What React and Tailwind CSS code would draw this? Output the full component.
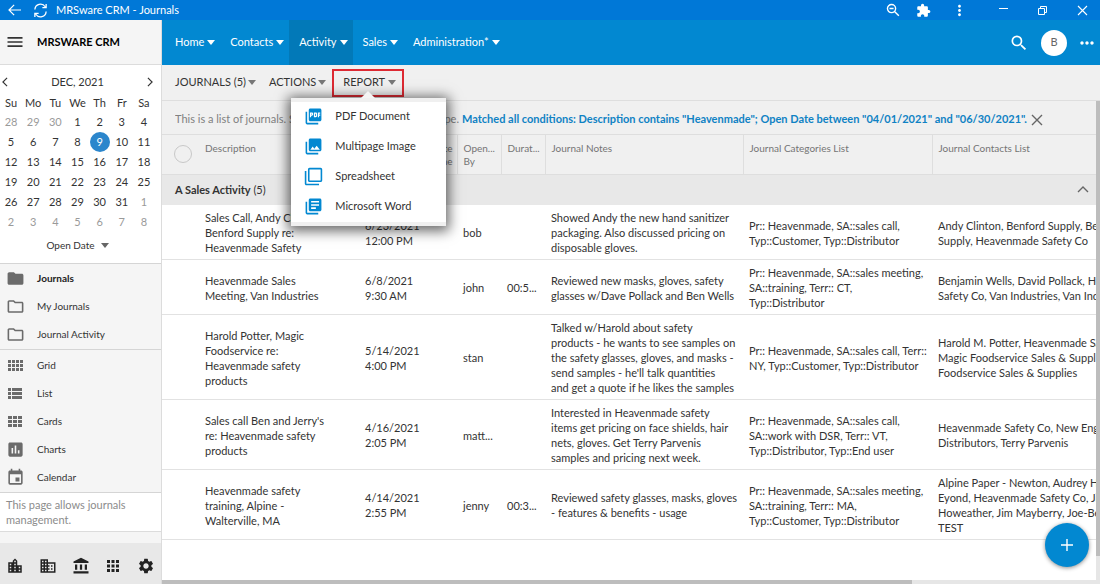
import React from "react";
import {
  MdAccountBalance,
  MdApps,
  MdBusiness,
  MdEvent,
  MdExtension,
  MdFilterNone,
  MdFolder,
  MdInsertChart,
  MdLibraryBooks,
  MdLocationCity,
  MdMenu,
  MdMoreHoriz,
  MdMoreVert,
  MdOutlineFolder,
  MdPhotoLibrary,
  MdPictureAsPdf,
  MdSearch,
  MdSettings,
} from "react-icons/md";

function Caret({ className = "" }) {
  return (
    <svg viewBox="0 0 8 5" className={"h-[5px] w-2 shrink-0 " + className} aria-hidden="true">
      <path d="M0 0h8L4 5z" fill="currentColor" />
    </svg>
  );
}

function Line({ d, size = "size-4", box = "0 0 16 16", width = 1.4 }) {
  return (
    <svg viewBox={box} className={size} fill="none" stroke="currentColor" strokeWidth={width} aria-hidden="true">
      <path d={d} />
    </svg>
  );
}

function Blocks({ cols, rows, widths }) {
  const cells = [];
  let x = 1;
  for (let c = 0; c < cols; c += 1) {
    for (let r = 0; r < rows; r += 1) {
      cells.push(<rect key={c + "-" + r} x={x} y={2 + r * 4} width={widths[c]} height={3} />);
    }
    x += widths[c] + 1;
  }
  return (
    <svg viewBox="0 0 17 15" className="h-[15px] w-[17px]" fill="currentColor" aria-hidden="true">
      {cells}
    </svg>
  );
}

const weeks = [
  [28, 29, 30, 1, 2, 3, 4],
  [5, 6, 7, 8, 9, 10, 11],
  [12, 13, 14, 15, 16, 17, 18],
  [19, 20, 21, 22, 23, 24, 25],
  [26, 27, 28, 29, 30, 31, 1],
  [2, 3, 4, 5, 6, 7, 8],
];

function dayClass(day, week) {
  const outside = (week === 0 && day > 20) || (week > 3 && day < 10);
  if (outside) return "size-5 text-[#9a9a9a]";
  if (day === 9) return "size-5 rounded-full bg-[#2b86cc] text-white";
  return "size-5";
}

const menus = ["Home", "Contacts", "Activity", "Sales", "Administration*"];

const reports = [
  ["PDF Document", MdPictureAsPdf],
  ["Multipage Image", MdPhotoLibrary],
  ["Spreadsheet", MdFilterNone],
  ["Microsoft Word", MdLibraryBooks],
];

const folders = [
  ["Journals", <MdFolder size={19} />],
  ["My Journals", <MdOutlineFolder size={19} />],
  ["Journal Activity", <MdOutlineFolder size={19} />],
];

const views = [
  ["Grid", <Blocks cols={4} rows={3} widths={[3, 3, 3, 3]} />],
  ["List", <Blocks cols={2} rows={3} widths={[3, 10]} />],
  ["Cards", <Blocks cols={3} rows={3} widths={[4, 4, 4]} />],
  ["Charts", <MdInsertChart size={19} />],
  ["Calendar", <MdEvent size={19} />],
];

const shortcuts = [
  ["City", MdLocationCity],
  ["Companies", MdBusiness],
  ["Accounts", MdAccountBalance],
  ["Apps", MdApps],
  ["Settings", MdSettings],
];

const journals = [
  {
    description: "Sales Call, Andy Clinton,\nBenford Supply re:\nHeavenmade Safety",
    date: "6/23/2021\n12:00 PM",
    by: "bob",
    duration: "",
    notes: "Showed Andy the new hand sanitizer\npackaging. Also discussed pricing on\ndisposable gloves.",
    categories: "Pr:: Heavenmade, SA::sales call,\nTyp::Customer, Typ::Distributor",
    contacts: "Andy Clinton, Benford Supply, Benford\nSupply, Heavenmade Safety Co",
  },
  {
    description: "Heavenmade Sales\nMeeting, Van Industries",
    date: "6/8/2021\n9:30 AM",
    by: "john",
    duration: "00:5...",
    notes: "Reviewed new masks, gloves, safety\nglasses w/Dave Pollack and Ben Wells",
    categories: "Pr:: Heavenmade, SA::sales meeting,\nSA::training, Terr:: CT,\nTyp::Distributor",
    contacts: "Benjamin Wells, David Pollack, Heavenmade\nSafety Co, Van Industries, Van Industries",
  },
  {
    description: "Harold Potter, Magic\nFoodservice re:\nHeavenmade safety\nproducts",
    date: "5/14/2021\n4:00 PM",
    by: "stan",
    duration: "",
    notes:
      "Talked w/Harold about safety\nproducts - he wants to see samples on\nthe safety glasses, gloves, and masks -\nsend samples - he'll talk quantities\nand get a quote if he likes the samples",
    categories: "Pr:: Heavenmade, SA::sales call, Terr::\nNY, Typ::Customer, Typ::Distributor",
    contacts: "Harold M. Potter, Heavenmade Safety Co,\nMagic Foodservice Sales & Supplies, Magic\nFoodservice Sales & Supplies",
  },
  {
    description: "Sales call Ben and Jerry's\nre: Heavenmade safety\nproducts",
    date: "4/16/2021\n2:05 PM",
    by: "matt...",
    duration: "",
    notes:
      "Interested in Heavenmade safety\nitems get pricing on face shields, hair\nnets, gloves. Get Terry Parvenis\nsamples and pricing next week.",
    categories: "Pr:: Heavenmade, SA::sales call,\nSA::work with DSR, Terr:: VT,\nTyp::Distributor, Typ::End user",
    contacts: "Heavenmade Safety Co, New England\nDistributors, Terry Parvenis",
  },
  {
    description: "Heavenmade safety\ntraining, Alpine -\nWalterville, MA",
    date: "4/14/2021\n2:55 PM",
    by: "jenny",
    duration: "00:3...",
    notes: "Reviewed safety glasses, masks, gloves\n- features & benefits - usage",
    categories: "Pr:: Heavenmade, SA::sales meeting,\nSA::training, Terr:: MA,\nTyp::Customer, Typ::Distributor",
    contacts: "Alpine Paper - Newton, Audrey Hill, Beth\nEyond, Heavenmade Safety Co, Jim\nHoweather, Jim Mayberry, Joe-Ben\nTEST",
  },
];

function TitleBar() {
  return (
    <header className="flex h-5 shrink-0 items-center bg-[#0078d7] pr-3 pl-2 text-white">
      <button aria-label="Back">
        <Line d="M1 7h14M7 1L1 7l6 6" box="0 0 16 14" size="h-3 w-[14px]" />
      </button>
      <button aria-label="Reload" className="ml-[11px]">
        <Line d="M2 7a6 6 0 0 1 11-3M14 1v4h-4M14 9a6 6 0 0 1-11 3M2 15v-4h4" size="size-[15px]" />
      </button>
      <span className="ml-2 text-[11px]">MRSware CRM - Journals</span>
      <div className="ml-auto flex items-center">
        <button aria-label="Zoom" className="mr-4">
          <svg viewBox="0 0 24 24" className="size-[14px]" fill="none" stroke="currentColor" strokeWidth="2.4">
            <circle cx="9.5" cy="9.5" r="7" />
            <path d="M6 9.500h7M15 15l7 7" />
          </svg>
        </button>
        <button aria-label="Extensions" className="mr-5">
          <MdExtension size={15} />
        </button>
        <button aria-label="More" className="mr-[30px]">
          <MdMoreVert size={17} />
        </button>
        <button aria-label="Minimize" className="mr-[28px]">
          <Line d="M1 3.500h9" box="0 0 11 11" size="size-[11px]" width={1} />
        </button>
        <button aria-label="Restore" className="mr-[29px]">
          <Line d="M1.500 3.500h6v6h-6zM3.500 3.500v-2h6v6h-2" box="0 0 11 11" size="size-[11px]" width={1} />
        </button>
        <button aria-label="Close">
          <Line d="M1 1l9 9M10 1l-9 9" box="0 0 11 11" size="size-[11px]" width={1.1} />
        </button>
      </div>
    </header>
  );
}

function Sidebar() {
  return (
    <aside className="flex w-[162px] shrink-0 flex-col border-r border-[#dcdcdc] bg-[#f5f5f5] text-[#333]">
      <div className="flex h-[45px] shrink-0 items-center border-b border-[#dcdcdc] pl-[5px]">
        <button aria-label="Menu">
          <MdMenu size={20} />
        </button>
        <span className="ml-3 text-[11px] font-bold text-black">MRSWARE CRM</span>
      </div>

      <section className="flex h-[198px] shrink-0 flex-col bg-white pr-1.5 text-[11px]">
        <div className="flex items-center justify-between pt-[9px] pr-px pb-0.5 pl-px">
          <button aria-label="Previous month">
            <Line d="M7 1L2 6l5 5" box="0 0 9 12" size="h-[10px] w-2" />
          </button>
          <span className="leading-4">DEC, 2021</span>
          <button aria-label="Next month">
            <Line d="M2 1l5 5-5 5" box="0 0 9 12" size="h-[10px] w-2" />
          </button>
        </div>
        <table className="w-full table-fixed text-center leading-5">
          <thead>
            <tr>
              {["Su", "Mo", "Tu", "We", "Th", "Fr", "Sa"].map((d) => (
                <th key={d} className="p-0 pt-0.5 leading-[18px] font-normal">
                  {d}
                </th>
              ))}
            </tr>
          </thead>
          <tbody>
            {weeks.map((week, i) => (
              <tr key={i}>
                {week.map((day) => (
                  <td key={day} className="h-5 p-0">
                    <button className={dayClass(day, i)}>{day}</button>
                  </td>
                ))}
              </tr>
            ))}
          </tbody>
        </table>
        <button className="mt-[5px] flex items-center justify-center gap-1.5 text-[10px] leading-4">
          Open Date <Caret className="text-[#666]" />
        </button>
      </section>

      <nav className="border-t border-b border-[#d5d5d5] pb-px text-[10px]">
        {folders.map(([label, icon], i) => (
          <a key={label} href="#" className={"flex h-[28px] items-center pl-[5px] " + (i === 0 ? "font-bold text-[#222]" : "")}>
            <span className="flex w-5 justify-center text-[#6b6b6b]">{icon}</span>
            <span className="ml-3">{label}</span>
          </a>
        ))}
      </nav>
      <nav className="border-b border-[#d5d5d5] pt-px pb-px text-[10px]">
        {views.map(([label, icon]) => (
          <a key={label} href="#" className="flex h-[28px] items-center pl-[5px]">
            <span className="flex w-5 justify-center text-[#6b6b6b]">{icon}</span>
            <span className="ml-3">{label}</span>
          </a>
        ))}
      </nav>
      <p className="border-b border-[#dcdcdc] bg-white py-1 pl-1.5 text-[11px] leading-[15px] text-[#8c8c8c]">
        This page allows journals
        <br />
        management.
      </p>
      <div className="mt-auto flex h-[41px] shrink-0 items-center justify-between bg-[#e8e8e8] px-[6px] pt-1 text-[#222]">
        {shortcuts.map(([label, Icon]) => (
          <button key={label} aria-label={label}>
            <Icon size={18} />
          </button>
        ))}
      </div>
    </aside>
  );
}

function ReportMenu() {
  return (
    <div className="relative">
      <button className="flex h-7 items-center gap-[3px] border-2 border-[#dd2a33] pr-[6px] pl-[9px]">
        REPORT <Caret className="text-[#777]" />
      </button>
      <div className="absolute top-[29px] left-[-41px] z-20 w-[155px] border-y-4 border-[#f0f0f0] bg-white shadow-[0_2px_12px_3px_rgba(0,0,0,0.6)]">
        <svg viewBox="0 0 14 7" className="absolute top-[-11px] left-[70px] h-[7px] w-[14px]" aria-hidden="true">
          <path d="M0 7l7-7 7 7z" fill="#f4f4f4" />
        </svg>
        {reports.map(([label, Icon]) => (
          <button key={label} className="flex h-[30px] w-full items-center gap-3 pl-[13px] whitespace-nowrap">
            <Icon size={19} className="shrink-0 text-[#0288d1]" />
            {label}
          </button>
        ))}
      </div>
    </div>
  );
}

function JournalTable() {
  const head = "border-r border-[#dedede] pt-[7px] pl-1.5 align-top font-normal text-[#757575]";
  const cell = "pt-[5px] pb-1 pl-1.5";
  return (
    <table className="w-full table-fixed border-collapse text-left text-[11px] leading-[15px] whitespace-pre">
      <colgroup>
        <col className="w-[37px]" />
        <col className="w-[160px]" />
        <col className="w-[98px]" />
        <col className="w-[44px]" />
        <col className="w-[44px]" />
        <col className="w-[198px]" />
        <col className="w-[189px]" />
        <col />
      </colgroup>
      <thead className="bg-[#f0f0f0] text-[10px] leading-[13px]">
        <tr className="h-[39px] border-b border-[#dedede]">
          <th className="pl-3 font-normal">
            <input
              type="checkbox"
              aria-label="Select all"
              className="block size-[18px] appearance-none rounded-full border border-[#c8c8c8]"
            />
          </th>
          <th className={"border-r-0! " + head}>Description</th>
          <th className={head + " pr-1 text-right"}>{"Open Date\nTime Zone"}</th>
          <th className={head}>{"Open...\nBy"}</th>
          <th className={head}>Durat...</th>
          <th className={head}>Journal Notes</th>
          <th className={head}>Journal Categories List</th>
          <th className={head + " border-r-0"}>Journal Contacts List</th>
        </tr>
      </thead>
      <tbody>
        <tr className="h-[31px] bg-[#e8e8e8]">
          <td colSpan={8} className="px-[13px]">
            <div className="flex items-center justify-between">
              <span>
                <b className="font-bold">A Sales Activity</b> (5)
              </span>
              <button aria-label="Collapse group" className="-mr-1.5 text-[#666]">
                <Line d="M1 7l5-5 5 5" box="0 0 12 9" size="h-[9px] w-3" />
              </button>
            </div>
          </td>
        </tr>
        {journals.map((j) => (
          <tr key={j.description} className="border-b border-[#e2e2e2]">
            <td />
            <td className={cell}>{j.description}</td>
            <td className={cell}>{j.date}</td>
            <td className={cell}>{j.by}</td>
            <td className={cell}>{j.duration}</td>
            <td className={cell}>{j.notes}</td>
            <td className={cell}>{j.categories}</td>
            <td className={cell + " overflow-hidden"}>{j.contacts}</td>
          </tr>
        ))}
      </tbody>
    </table>
  );
}

export default function App() {
  return (
    <div className="flex h-screen flex-col overflow-hidden bg-white font-['Lato','Open_Sans',sans-serif] text-[11px] text-[#333]">
      <TitleBar />
      <div className="flex min-h-0 flex-1">
        <Sidebar />
        <main className="relative flex min-w-0 flex-1 flex-col">
          <div className="flex h-[45px] shrink-0 items-center bg-[#0288d1] pl-[3px] text-white">
            <nav className="flex h-full">
              {menus.map((m) => (
                <button
                  key={m}
                  className={"flex items-center gap-[3px] pr-[5px] pl-[10px] " + (m === "Activity" ? "bg-[#0279b8]" : "")}
                >
                  {m} <Caret />
                </button>
              ))}
            </nav>
            <div className="ml-auto flex items-center pr-[3px]">
              <button aria-label="Search">
                <MdSearch size={20} />
              </button>
              <button className="ml-3 size-[26px] rounded-full bg-white text-[11px] text-[#666]">B</button>
              <button aria-label="More options" className="ml-2.5">
                <MdMoreHoriz size={20} />
              </button>
            </div>
          </div>

          <div className="flex h-[36px] shrink-0 items-center border-b border-[#dedede] bg-[#f0f0f0] pl-[13px]">
            <button className="flex items-center gap-0.5">
              JOURNALS (5) <Caret className="text-[#777]" />
            </button>
            <button className="mr-[6px] ml-[13px] flex items-center gap-0.5">
              ACTIONS <Caret className="text-[#777]" />
            </button>
            <ReportMenu />
          </div>

          <div className="flex min-h-0 flex-1">
            <div className="flex min-w-0 flex-1 flex-col">
              <div className="flex h-[34px] shrink-0 items-center border-b border-[#dedede] bg-[#f0f0f0] pt-1 pl-[13px] whitespace-nowrap text-[#808080]">
                <span className="w-[287px] overflow-hidden pr-[3px]">
                  <span className="flex justify-between">
                    <span>This is a list of journals. Select</span>
                    <span>type.</span>
                  </span>
                </span>
                <a href="#" className="font-bold text-[#0f82c4]">
                  Matched all conditions: Description contains "Heavenmade"; Open Date between "04/01/2021" and "06/30/2021".
                </a>
                <button aria-label="Clear filter" className="ml-1 text-[#666]">
                  <Line d="M1 1l10 10M11 1L1 11" box="0 0 12 12" size="size-3" />
                </button>
              </div>
              <div className="min-h-0 flex-1 overflow-hidden">
                <JournalTable />
              </div>
            </div>
            <div className="w-1 shrink-0 bg-[#e6e6e6]">
              <div className="h-[95%] bg-[#bdbdbd]" />
            </div>
          </div>
          <div className="h-1 shrink-0 bg-[#e6e6e6]">
            <div className="h-full w-4/5 bg-[#bdbdbd]" />
          </div>

          <button
            aria-label="Add journal"
            className="absolute right-[11px] bottom-[17px] flex size-11 items-center justify-center rounded-full bg-[#0288d1] text-white shadow-[0_1px_4px_rgba(0,0,0,0.45)]"
          >
            <Line d="M6 0v12M0 6h12" box="0 0 12 12" size="size-3" />
          </button>
        </main>
      </div>
    </div>
  );
}
